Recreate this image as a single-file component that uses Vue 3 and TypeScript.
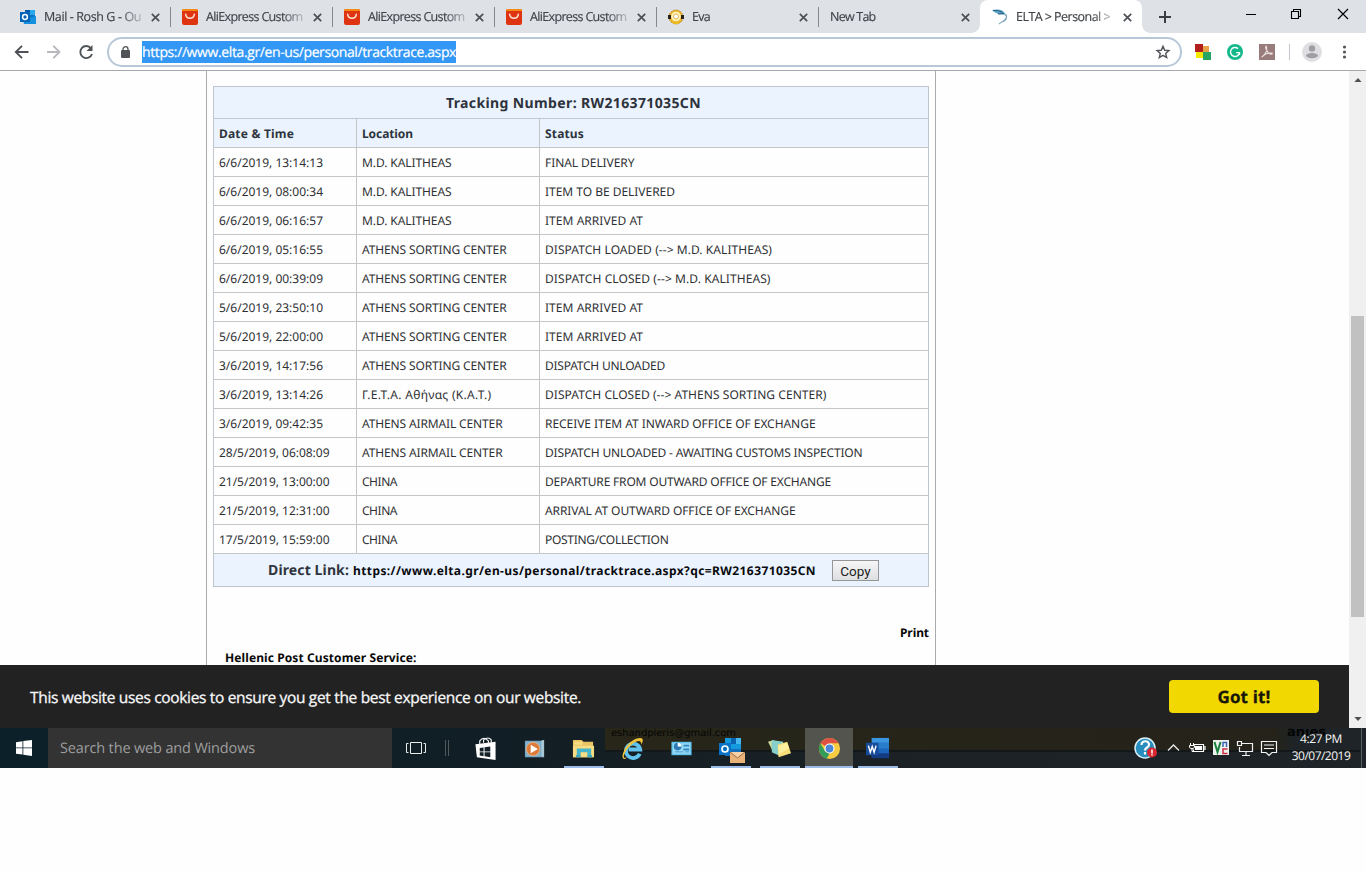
<script setup lang="ts">
import type { Directive } from 'vue'

// Spreads the letters of a label so that it takes exactly the given width.
const vFit: Directive<HTMLElement, number> = {
  mounted(el, binding) {
    const range = document.createRange()
    range.selectNodeContents(el)
    const natural = range.getBoundingClientRect().width
    const count = (el.textContent ?? '').length
    el.style.letterSpacing = `${(binding.value - natural) / count}px`
  },
}

interface Tab { icon: string; title: string; width: number; active?: boolean }
const tabs: Tab[] = [
  { icon: 'outlook', title: 'Mail - Rosh G - Ou', width: 97 },
  { icon: 'ali', title: 'AliExpress Custom', width: 96.5 },
  { icon: 'ali', title: 'AliExpress Custom', width: 96.5 },
  { icon: 'ali', title: 'AliExpress Custom', width: 96.5 },
  { icon: 'eva', title: 'Eva', width: 18 },
  { icon: '', title: 'New Tab', width: 45.5 },
  { icon: 'elta', title: 'ELTA > Personal >', width: 94, active: true },
]

interface Cell { text: string; width: number }
const c = (text: string, width: number): Cell => ({ text, width })
const kal = c('M.D. KALITHEAS', 89.5)
const sorting = c('ATHENS SORTING CENTER', 144.5)
const airmail = c('ATHENS AIRMAIL CENTER', 140.5)
const china = c('CHINA', 35)
const rows: Cell[][] = [
  [c('6/6/2019, 13:14:13', 104), kal, c('FINAL DELIVERY', 89.5)],
  [c('6/6/2019, 08:00:34', 104), kal, c('ITEM TO BE DELIVERED', 130)],
  [c('6/6/2019, 06:16:57', 104), kal, c('ITEM ARRIVED AT', 98)],
  [c('6/6/2019, 05:16:55', 104), sorting, c('DISPATCH LOADED (--> M.D. KALITHEAS)', 227)],
  [c('6/6/2019, 00:39:09', 104), sorting, c('DISPATCH CLOSED (--> M.D. KALITHEAS)', 225.5)],
  [c('5/6/2019, 23:50:10', 104), sorting, c('ITEM ARRIVED AT', 98)],
  [c('5/6/2019, 22:00:00', 104), sorting, c('ITEM ARRIVED AT', 98)],
  [c('3/6/2019, 14:17:56', 104), sorting, c('DISPATCH UNLOADED', 120)],
  [c('3/6/2019, 13:14:26', 104), c('Γ.Ε.Τ.Α. Αθήνας (Κ.Α.Τ.)', 129.5), c('DISPATCH CLOSED (--> ATHENS SORTING CENTER)', 281.5)],
  [c('3/6/2019, 09:42:35', 104), airmail, c('RECEIVE ITEM AT INWARD OFFICE OF EXCHANGE', 270.5)],
  [c('28/5/2019, 06:08:09', 110.5), airmail, c('DISPATCH UNLOADED - AWAITING CUSTOMS INSPECTION', 317.5)],
  [c('21/5/2019, 13:00:00', 110.5), china, c('DEPARTURE FROM OUTWARD OFFICE OF EXCHANGE', 286)],
  [c('21/5/2019, 12:31:00', 110.5), china, c('ARRIVAL AT OUTWARD OFFICE OF EXCHANGE', 250.5)],
  [c('17/5/2019, 15:59:00', 110.5), china, c('POSTING/COLLECTION', 123.5)],
]
</script>

<template>
  <div class="screen">
    <header class="tabs">
      <div v-for="(t, i) in tabs" :key="i" class="tab" :class="{ active: t.active, sep: i < 5 }">
        <svg v-if="t.icon === 'outlook'" class="fav" viewBox="0 0 16 16"><path d="M5 1h10v13H5z" fill="#28a8ea"/><path d="M5 1h5v5H5z" fill="#0358a7"/><path d="M10 6h5v5h-5z" fill="#0a75c7"/><path d="M3 11l13-4v8H4z" fill="#1490df"/><path d="M0 3h10v10H0z" fill="#0364b8"/><circle cx="5" cy="8" r="2.4" fill="none" stroke="#fff" stroke-width="1.5"/></svg>
        <svg v-else-if="t.icon === 'ali'" class="fav" viewBox="0 0 16 16"><rect width="16" height="16" rx="2" fill="#df3411"/><path d="M1.5 0h13a1.5 1.5 0 011.5 2H0a1.5 1.5 0 011.5-2" fill="#f38a16"/><path d="M3.700 5.300c.8 5.200 7.800 5.200 8.600 0" fill="none" stroke="#ffe4d5" stroke-width="1.500" stroke-linecap="round"/></svg>
        <svg v-else-if="t.icon === 'eva'" class="fav" viewBox="0 0 16 16"><circle cx="8" cy="8" r="7" fill="#eab52b" stroke="#c48a2c" stroke-dasharray="2 1"/><path d="M0 6h3v4H0zm13 0h3v4h-3z" fill="#28211d"/><circle cx="8" cy="7.5" r="4.800" fill="#fff2b9"/><circle cx="8" cy="7.500" r="2.500" fill="#fff" stroke="#e2b54d"/><path d="M4 12.500h8l-2 2.500H6z" fill="#edbd20"/></svg>
        <svg v-else-if="t.icon === 'elta'" class="fav" viewBox="0 0 16 16"><path d="M0 1c4-.8 9-1.400 12 2l3 5-3-2.500C8 6 4 5 0 1z" fill="#5fa5c6"/><path d="M1 1.500c5-.5 8 .5 10 3M6 5l6-.5" stroke="#24618a" fill="none"/><path d="M13.500 5c3 4-1 6-6.500 10M14.500 8.500c0 2-2 3.500-4 4.500" fill="none" stroke="#7aa6be" stroke-width="1.100"/></svg>
        <div class="title"><span v-fit="t.width">{{ t.title }}</span></div>
        <svg class="close" viewBox="0 0 9 9"><path d="M.8.8l7.4 7.4M8.2.8L.8 8.2" stroke="#4c5055" stroke-width="1.7"/></svg>
      </div>
      <svg class="plus" viewBox="0 0 12 12"><path d="M6 0v12M0 6h12" stroke="#3b3e42" stroke-width="2"/></svg>
      <svg class="winctl" viewBox="0 0 106 14"><path d="M1 7.500h10" stroke="#000"/><path d="M46.500 5.500h7v7h-7zM48.500 5V3.500h7v7H54" fill="none" stroke="#000" stroke-width="1.100" transform="translate(0 -1)"/><path d="M93 2l10 10M103 2L93 12" stroke="#000" stroke-width="1.200"/></svg>
    </header>

    <div class="toolbar">
      <svg class="nav" viewBox="0 0 96 16"><path d="M14.500 8H2M8 1.800L1.800 8 8 14.200" fill="none" stroke="#4e5256" stroke-width="1.900"/><path d="M33 8h12.500M39.300 1.800L45.500 8l-6.200 6.200" fill="none" stroke="#b7b9bc" stroke-width="1.900"/><path d="M77 4.300A6 6 0 1078 10" fill="none" stroke="#4e5256" stroke-width="1.900"/><path d="M78.500 1v6h-6z" fill="#4e5256"/></svg>
      <div class="omnibox">
        <svg class="lock" viewBox="0 0 9 12"><rect y="4" width="9" height="8" rx="1" fill="#505357"/><path d="M2 5V3.200a2.500 2.500 0 015 0V5" fill="none" stroke="#505357" stroke-width="1.300"/></svg>
        <span class="url"><span v-fit="314">https://www.elta.gr/en-us/personal/tracktrace.aspx</span></span>
        <svg class="star" viewBox="0 0 14 14"><path d="M7 1.300l1.700 4 4.200.300-3.200 2.800 1 4.200L7 10.300l-3.700 2.300 1-4.200L1.100 5.600l4.200-.300z" fill="none" stroke="#505357" stroke-width="1.400"/></svg>
      </div>
      <svg class="ext" viewBox="0 0 166 22">
        <path d="M0 3h8v8H0z" fill="#b21f1d"/><path d="M8 5h6v6H8z" fill="#e8a348"/><path d="M1 11h7v6H1z" fill="#f6e800"/><path d="M8 11h8v8H8z" fill="#28a463"/>
        <circle cx="40" cy="11" r="8" fill="#14b88a"/><path d="M43 7.600a4.500 4.500 0 101.500 4H41.200M44.500 11v3" fill="none" stroke="#fff" stroke-width="1.400"/>
        <path d="M64 3h16v16H64z" fill="#987c7b"/><path d="M66.500 16c3-1 6-6 5-10 0-2-1.500 0-.5 2 1.500 3 4 6 6 5 2-1.500-6-2-10 3" fill="none" stroke="#eadddd" stroke-width="1.100"/>
        <path d="M94.500 3v16" stroke="#c1c6cd"/><circle cx="117" cy="11" r="10" fill="#dfdfe1"/><circle cx="117" cy="7.500" r="3.200" fill="#9e9fa2"/><path d="M111 15c0-4 12-4 12 0-3 3-9 3-12 0z" fill="#9e9fa2"/>
        <g fill="#54575b"><circle cx="149.500" cy="6" r="1.600"/><circle cx="149.500" cy="11" r="1.600"/><circle cx="149.500" cy="16" r="1.600"/></g>
      </svg>
    </div>

    <div class="viewport">
      <main class="page">
        <section class="table">
          <div class="caption"><span v-fit="255">Tracking Number: RW216371035CN</span></div>
          <div class="row head">
            <div><span v-fit="75">Date &amp; Time</span></div>
            <div><span v-fit="51">Location</span></div>
            <div><span v-fit="39">Status</span></div>
          </div>
          <div v-for="(r, i) in rows" :key="i" class="row">
            <div v-for="(cell, j) in r" :key="j"><span v-fit="cell.width">{{ cell.text }}</span></div>
          </div>
          <div class="direct">
            <span v-fit="81" class="label">Direct Link:</span>
            <span v-fit="463" class="link">https://www.elta.gr/en-us/personal/tracktrace.aspx?qc=RW216371035CN</span>
            <button>Copy</button>
          </div>
        </section>
        <div class="print"><span v-fit="29">Print</span></div>
        <div class="service"><span v-fit="191.500">Hellenic Post Customer Service:</span></div>
      </main>
      <div class="scroll">
        <svg viewBox="0 0 9 5"><path d="M4.500 0L9 5H0z" fill="#505050"/></svg>
        <div class="thumb"></div>
        <svg viewBox="0 0 9 5"><path d="M0 0h9L4.500 5z" fill="#505050"/></svg>
      </div>
      <div class="cookie">
        <span v-fit="551">This website uses cookies to ensure you get the best experience on our website.</span>
        <div class="got"><span v-fit="53">Got it!</span></div>
      </div>
    </div>

    <footer class="taskbar">
      <div class="shade"><span v-fit="125">eshandpieris@gmail.com</span><b>anies</b></div>
      <div class="start"><svg viewBox="0 0 16 16"><path d="M0 2.200L6.500 1.200v6.200H0zM7.300 1.100L16 0v7.400H7.300zM0 8.300h6.500v6.300L0 13.700zM7.300 8.300H16V16l-8.700-1.200z" fill="#fff"/></svg></div>
      <div class="search"><span v-fit="195">Search the web and Windows</span></div>
      <svg class="view" viewBox="0 0 44 16"><path d="M4.500 2.500h11v11h-11zM2.500 3.500h-2v9h2M17.500 3.500h2v9h-2" fill="none" stroke="#e9eeee"/><path d="M39.500 0v16M42.500 0v16" stroke="#51595c"/></svg>
      <div class="apps">
        <div class="app"><svg viewBox="0 0 24 24"><path d="M1.500 7.500L22.500 5v19L3 21z" fill="#fff"/><path d="M6 8V4q4-5 9 0v3M10 6V3q5-4 8 0v3" fill="none" stroke="#f7f8f8" stroke-width="1.200"/><path d="M6 11.500l4-.5v4H6zM11 10.800l6-.8v5h-6zM6 16h4v4l-4-.600zM11 16h6v5l-6-.800z" fill="#142027"/></svg></div>
        <div class="app"><svg viewBox="0 0 24 24"><path d="M2 4h17l3-1v18H2z" fill="#74a6c4"/><path d="M19 4l3-1v18l-3-1z" fill="#a8c7d5"/><path d="M3 5h15v15H3z" fill="#83b4ce"/><circle cx="10.500" cy="12.500" r="7" fill="#db7b3b" stroke="#e8ae7d"/><path d="M8 8l7.500 4.500L8 17z" fill="#fff"/></svg></div>
        <div class="app on"><svg viewBox="0 0 24 24"><path d="M1 3h9l2 2h10v16H1z" fill="#eac462"/><path d="M2 5h9v3H2zM1 9h22v12H1z" fill="#f7dc82"/><path d="M5 20v-8h15v8h-4v-4H9v4z" fill="#45b6c9"/><path d="M4 19h5v2H4zm12 0h5v2h-5z" fill="#3ba3bd"/></svg></div>
        <div class="app"><svg viewBox="0 0 24 24"><path d="M19.500 17.500A7.500 7.500 0 1120 13H8" fill="none" stroke="#62c3ef" stroke-width="4"/><path d="M3 23C-2 20 8 1 20 1c4 0 3 4 1 7 1-5-4-5-9-1-6 5-9 10-9 14 0 1 1 1 3 0-1 1.500-2 2-3 2z" fill="#f1c438"/></svg></div>
        <div class="app"><svg viewBox="0 0 24 24"><path d="M1.500 5h21v14h-21z" fill="#64c4ef"/><path d="M3 6.500h18v11H3z" fill="#96daf4"/><circle cx="8" cy="10" r="4" fill="#2c79b8"/><path d="M8 10V6a4 4 0 014 4z" fill="#fff"/><path d="M14 8h6v2h-6zm0 4h6v2h-6zM5 15h9v1H5zm11 0h4v1h-4z" fill="#3389c4"/></svg></div>
        <div class="app on"><svg class="wide" viewBox="0 0 26 26"><path d="M7 1h16v12H7z" fill="#1599df"/><path d="M13 1h5v6h-5z" fill="#0b62af"/><path d="M18 1h5v6h-5z" fill="#45b9ef"/><path d="M7 12h16v7H7z" fill="#146fbd"/><path d="M1 6h12v12H1z" fill="#0872c7"/><circle cx="7" cy="12" r="3" fill="none" stroke="#fff" stroke-width="1.700"/><path d="M12 15h15v11H12z" fill="#e8b279"/><path d="M12 15l7.500 6 7.500-6z" fill="#f6d1a5"/><path d="M12 15l7.500 6 7.500-6" fill="none" stroke="#9b6647"/></svg></div>
        <div class="app on"><svg viewBox="0 0 24 24"><path d="M0 5l6-2 4 13-4 1z" fill="#c5dba0"/><path d="M4 3l12 2-3 15-9-4z" fill="#85d0cb"/><path d="M10 8l10-3 4 12-13 4z" fill="#f6df79"/><path d="M11 9l9-3 2 6-11 6z" fill="#fff0a0"/></svg></div>
        <div class="app on chrome"><svg viewBox="0 0 24 24"><circle cx="12" cy="12" r="11" fill="#f7cc40"/><path d="M12 12L2.500 6.500A11 11 0 0121.500 6.500H12z" fill="#df5145"/><path d="M2.500 6.500L7.200 14.700l4.800 2.600-3 5.300A11 11 0 012.500 6.500z" fill="#339c58"/><circle cx="12" cy="12" r="5.300" fill="#fff"/><circle cx="12" cy="12" r="4.100" fill="#4c86d9"/></svg></div>
        <div class="app on"><svg viewBox="0 0 24 24"><path d="M6 1h18v21H6z" fill="#1c65bd"/><path d="M6 1h18v5H6z" fill="#3c95df"/><path d="M6 6h18v6H6z" fill="#287cca"/><path d="M6 17h18v5H6z" fill="#153c82"/><path d="M0 6h13v13H0z" fill="#174b9b"/><path d="M2.500 9l2 7 2-6 2 6 2-7" fill="none" stroke="#fff" stroke-width="1.500"/></svg></div>
      </div>
      <svg class="tray" viewBox="0 0 150 26">
        <circle cx="11" cy="13" r="10" fill="#278ebd" stroke="#d8eff5" stroke-width="1.500"/><path d="M7.500 10c0-5 8-5 7.500 0-.300 2.600-4 2.500-4 5.500M11 17v2.500" fill="none" stroke="#fff" stroke-width="2.200"/><circle cx="18" cy="17.500" r="5" fill="#d92732"/><path d="M18 14.500v4M18 19.300v1.200" stroke="#fff" stroke-width="1.500"/>
        <path d="M34 15.500l5.500-5.500 5.500 5.500" fill="none" stroke="#e8eaea" stroke-width="1.300"/>
        <path d="M59.500 9.500h10v7h-10v-2M71 11v4" fill="none" stroke="#fff" stroke-width="1.200"/><path d="M61 11h7v4h-7z" fill="#fff"/><path d="M56.500 8v2m3-2v2M55.500 10.500h5v2l-1.500 1h-2l-1.500-1zM58 13.500v3h2" fill="none" stroke="#fff"/>
        <path d="M79 5h16v15H79z" fill="#eef2ed"/><path d="M80.500 7l3 10 3-10" fill="none" stroke="#18813c" stroke-width="2"/><path d="M89 12V7.500h3.500V12" fill="none" stroke="#3868b4" stroke-width="1.500"/><path d="M93.500 14H89v4.500h4.500" fill="none" stroke="#cd2d43" stroke-width="1.500"/>
        <path d="M108 8.500h10.500v8h-13V12M103.500 6.500h4v4h-4zM112 17v3m-4 .500h8" fill="none" stroke="#eef1f1" stroke-width="1.200"/>
        <path d="M127.500 6.500h15v11h-4.500l-3 3-3-3h-4.500zM130 10h10m-10 3.500h10" fill="none" stroke="#f2f3f3" stroke-width="1.200"/>
      </svg>
      <div class="clock"><span v-fit="42">4:27 PM</span><span v-fit="58.500">30/07/2019</span></div>
      <div class="peek"></div>
    </footer>
  </div>
</template>

<style>
body { margin: 0; background: #fff; }
</style>

<style scoped>
.screen { width: 1366px; height: 873px; overflow: hidden; background: #fefefe; display: flex; flex-direction: column; font-family: "Open Sans", sans-serif; text-rendering: geometricPrecision; }
svg { display: block; flex: none; overflow: visible; }
span { white-space: nowrap; }
.tabs { height: 33px; flex: none; box-sizing: border-box; background: #dee1e6; padding-left: 8px; display: flex; }
.tab { width: 162px; height: 33px; box-sizing: border-box; padding: 0 10px 0 12px; display: flex; align-items: center; flex: none; position: relative; }
.tab.sep::after { content: ""; position: absolute; right: -1px; top: 7px; width: 1px; height: 20px; background: #85888d; }
.tab.active { background: #fff; border-radius: 8px 8px 0 0; }
.tab.active::before, .tab.active::after { content: ""; position: absolute; bottom: 0; width: 8px; height: 8px; }
.tab.active::before { left: -8px; background: radial-gradient(circle at 0 0, #dee1e6 7.5px, #fff 8px); }
.tab.active::after { right: -8px; background: radial-gradient(circle at 100% 0, #dee1e6 7.5px, #fff 8px); }
.fav { width: 16px; height: 16px; margin-right: 8px; }
.title { flex: 1; font-size: 12.500px; line-height: 20px; color: #3f4247; -webkit-text-stroke: 0.150px; white-space: nowrap; mask-image: linear-gradient(90deg, #000 76px, rgba(0, 0, 0, 0.25) 97px); }
.tab .close { width: 9px; height: 9px; margin: 1px .5px 0 6px; }
.plus { width: 12px; height: 12px; margin: 11px 0 0 17px; }
.winctl { width: 106px; height: 14px; margin: 7px 0 0 74px; }
.toolbar { height: 38px; box-sizing: border-box; flex: none; border-bottom: 1px solid #a6a8ac; background: #fff; display: flex; align-items: center; padding-left: 14px; }
.nav { width: 96px; height: 16px; }
.omnibox { width: 1075px; height: 30px; box-sizing: border-box; margin-left: -3px; border: 2px solid #b8c8d8; border-radius: 15px; display: flex; align-items: center; padding: 0 10px 0 12px; }
.lock { width: 9px; height: 12px; margin-right: 12px; }
.url { background: #3297f5; color: #fff; font-size: 14px; line-height: 24px; height: 22px; width: 314px; -webkit-text-stroke: 0.200px; }
.star { width: 14px; height: 14px; margin-left: auto; }
.ext { width: 166px; height: 22px; margin-left: 13px; }
.viewport { position: relative; height: 657px; flex: none; display: flex; background: #fefefe; overflow: hidden; }
.page { width: 730px; box-sizing: border-box; margin-left: 206px; border: solid #a9abad; border-width: 0 1px; padding: 15px 6px 0; font-family: "Noto Sans", sans-serif; }
.table { width: 716px; box-sizing: border-box; border: 1px solid #c0c6ce; border-bottom-color: #bbc5d5; }
.caption { height: 31px; line-height: 33px; background: #ebf3fe; border-bottom: 1px solid #c0c8d1; text-align: center; font-weight: 700; font-size: 14px; color: #2d323b; padding-left: 5px; }
.row { display: grid; grid-template-columns: 143px 183px 388px; height: 29px; font-size: 12px; line-height: 30px; color: #2e3033; }
.row > div { box-sizing: border-box; height: 29px; border-bottom: 1px solid #c3c5c7; border-right: 1px solid #c3c5c7; padding-left: 5px; }
.row > div:last-child { border-right: 0; }
.row.head { background: #ebf3fe; font-weight: 700; color: #2e343d; }
.direct { height: 32px; background: #ebf3fe; display: flex; align-items: center; padding-left: 54px; font-weight: 700; }
.label { font-size: 14px; color: #30353d; width: 85px; }
.link { font-size: 12px; color: #080a0d; width: 463px; }
.direct button { margin: 1px 0 0 16px; width: 47px; height: 21px; box-sizing: border-box; padding: 0; border: 1px solid #949699; background: linear-gradient(#f6f6f6, #dedfe1); font-family: Roboto, sans-serif; font-size: 13.500px; line-height: 18px; color: #222; }
.print { margin-top: 35px; height: 22px; line-height: 22px; text-align: right; font-size: 12px; font-weight: 700; color: #080808; }
.service { margin-top: 3px; padding-left: 12px; line-height: 22px; font-size: 12px; font-weight: 700; color: #080808; }
.scroll { width: 17px; margin-left: 413px; background: #f0f0f0; display: flex; flex-direction: column; align-items: center; box-sizing: border-box; padding: 7px 0; }
.scroll svg { width: 8px; height: 4px; }
.thumb { width: 13px; height: 301px; margin: 234px 0 auto; background: #c1c1c1; }
.cookie { position: absolute; left: 0; bottom: 0; width: 1349px; height: 63px; background: #222; color: #f7f7f7; box-sizing: border-box; padding: 0 30px; display: flex; align-items: center; justify-content: space-between; font-size: 15.500px; -webkit-text-stroke: 0.300px; }
.got { width: 150px; height: 33px; line-height: 33px; border-radius: 4px; background: #f1d800; color: #171609; text-align: center; font-size: 17px; font-weight: 700; }
.taskbar { position: relative; height: 40px; flex: none; display: flex; align-items: center; background: linear-gradient(90deg, #0b2029, #111e25 35%, #1b2124 65%, #1e2428); overflow: hidden; }
.taskbar > * { position: relative; }
.taskbar > .shade { position: absolute; left: 605px; top: 0; width: 755px; height: 24px; box-sizing: border-box; padding: 0 34px 0 6px; display: flex; justify-content: space-between; background: linear-gradient(90deg, #272619 0, #25231a 670px, transparent 690px); color: #050505; font: 10px/12px "DejaVu Sans", sans-serif; border-bottom: 2px solid #121719; }
.shade b { font-size: 13px; line-height: 10px; }
.start { width: 48px; height: 40px; display: grid; place-items: center; }
.start svg { width: 16px; height: 16px; }
.search { width: 344px; height: 40px; line-height: 42px; box-sizing: border-box; padding-left: 12px; background: #333; color: #9d9e9e; font-size: 14.500px; }
.view { width: 44px; height: 16px; margin-left: 14px; }
.apps { height: 40px; display: flex; margin-left: 11px; }
.app { width: 49px; height: 40px; position: relative; display: flex; align-items: center; justify-content: center; }
.app svg { width: 23px; height: 23px; }
.app .wide { width: 26px; height: 26px; margin-top: 3px; }
.app.on::after { content: ""; position: absolute; left: 5px; bottom: 0; width: 40px; height: 2px; background: #9bbce7; }
.app.chrome { width: 48px; margin-left: 1px; background: #53544e; }
.app.chrome::after { left: 0; width: 48px; }
.tray { width: 150px; height: 26px; margin-left: 232px; }
.clock { width: 66px; margin: -2px 0 0 4px; height: 36px; display: flex; flex-direction: column; align-items: center; justify-content: center; color: #f5f5f5; font-size: 12px; line-height: 17px; }
.peek { width: 1px; height: 40px; margin-left: 7px; background: #596063; }
</style>
